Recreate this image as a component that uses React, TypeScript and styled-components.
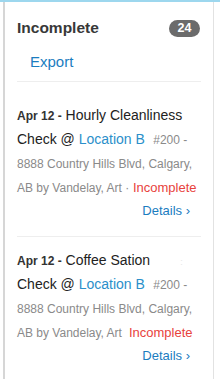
import styled, { createGlobalStyle } from "styled-components";

const GlobalStyle = createGlobalStyle`
  html, body {
    margin: 0;
    padding: 0;
    background: #ffffff;
  }
  body {
    font-family: "Liberation Sans", Arial, sans-serif;
  }
`;

const Page = styled.div`
  border-top: 2px solid #9dd7ee;
  height: 377px;
  overflow: hidden;
`;

const Panel = styled.section`
  margin-left: 3px;
  width: 211px;
  height: 100%;
  border-left: 2px solid #d6d6d6;
  border-right: 1px solid #e2e2e2;
  padding: 0 12px 0 12px;
  box-sizing: border-box;
`;

const Header = styled.header`
  padding-top: 17px;
  padding-bottom: 10px;
  border-bottom: 1px solid #eeeeee;
`;

const TitleRow = styled.div`
  display: flex;
  align-items: center;
  justify-content: space-between;
  height: 18px;
`;

const Title = styled.h2`
  margin: 0;
  font-size: 15.5px;
  line-height: 18px;
  font-weight: 700;
  color: #383838;
`;

const Badge = styled.span`
  display: inline-flex;
  align-items: center;
  justify-content: center;
  width: 31px;
  height: 17px;
  margin-right: 1px;
  border-radius: 9px;
  background: #6b6b6b;
  color: #ffffff;
  font-size: 12.5px;
  font-weight: 700;
`;

const ExportLink = styled.a`
  display: block;
  margin: 16px 0 0 13px;
  font-size: 15px;
  line-height: 18px;
  color: #1b7dbf;
  text-decoration: none;
`;

const List = styled.div`
  padding-top: 10px;
`;

const Item = styled.article`
  padding: 11px 0 13px;
  border-bottom: 1px solid #eeeeee;
`;

const Body = styled.p`
  margin: 0;
  color: #222222;
  font-size: 14px;
  line-height: 24px;
`;

const DateLabel = styled.strong`
  font-size: 12px;
  line-height: 1;
  font-weight: 700;
  color: #333333;
`;

const Ghost = styled.span`
  margin-left: 30px;
  font-size: 9px;
  line-height: 1;
  color: #e6e6e6;
`;

const Place = styled.span`
  color: #2b8fca;
  margin-right: 5px;
`;

const Meta = styled.span`
  font-size: 12px;
  line-height: 1;
  color: #8a8a8a;
`;

const Status = styled.span<{ $gap: number }>`
  margin-left: ${(p) => p.$gap}px;
  font-size: 13px;
  line-height: 1;
  color: #e8423d;
`;

const DetailsRow = styled.div`
  display: flex;
  justify-content: flex-end;
  padding-right: 11px;
  height: 24px;
  align-items: center;
`;

const DetailsLink = styled.a`
  font-size: 13px;
  line-height: 16px;
  color: #1b7dbf;
  text-decoration: none;
`;

type Task = {
  date: string;
  name: string;
  ghost?: boolean;
  dot: boolean;
};

const tasks: Task[] = [
  { date: "Apr 12 -", name: "Hourly Cleanliness", dot: true },
  { date: "Apr 12 -", name: "Coffee Sation", ghost: true, dot: false },
];

const TaskItem = ({ task }: { task: Task }) => (
  <Item>
    <Body>
      <DateLabel>{task.date}</DateLabel> {task.name}
      {task.ghost && <Ghost>:</Ghost>} Check @ <Place>Location B</Place>
      <Meta>
        {" "}#200 - 8888 Country Hills Blvd, Calgary, AB by Vandelay, Art
        {task.dot ? " ·" : ""}
      </Meta>
      <Status $gap={task.dot ? 0 : 7}>{task.dot ? " " : ""}Incomplete</Status>
    </Body>
    <DetailsRow>
      <DetailsLink href="#">Details ›</DetailsLink>
    </DetailsRow>
  </Item>
);

export default function App() {
  return (
    <>
      <GlobalStyle />
      <Page>
        <Panel>
          <Header>
            <TitleRow>
              <Title>Incomplete</Title>
              <Badge>24</Badge>
            </TitleRow>
            <ExportLink href="#">Export</ExportLink>
          </Header>
          <List>
            {tasks.map((t, i) => (
              <TaskItem key={i} task={t} />
            ))}
          </List>
        </Panel>
      </Page>
    </>
  );
}
